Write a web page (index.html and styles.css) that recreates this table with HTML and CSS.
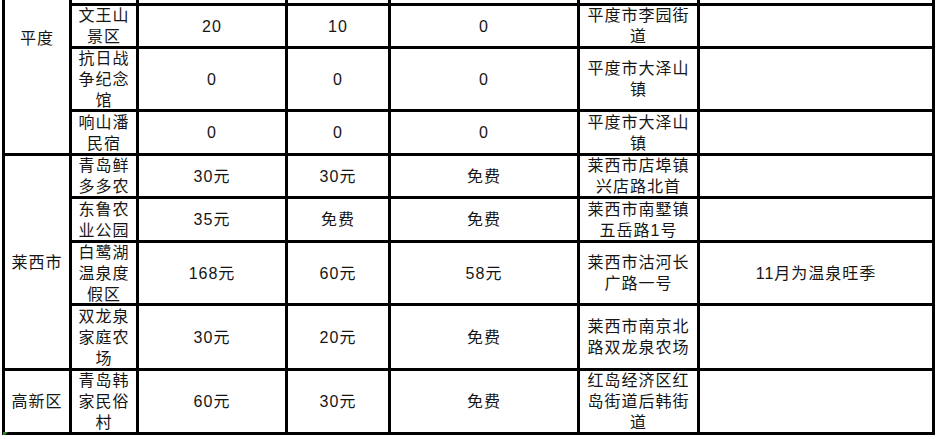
FILE: index.html
```html
<!DOCTYPE html>
<html lang="zh-CN">
<head>
<meta charset="utf-8">
<title>景区票价表</title>
<link rel="stylesheet" href="styles.css">
</head>
<body>
<div class="sheet">
  <!-- row 0 (mostly scrolled out of view) -->
  <div class="cell region span4">平度</div>
  <div class="cell"></div>
  <div class="cell bottom">（元/人次）</div>
  <div class="cell bottom">（元/人次）</div>
  <div class="cell"></div>
  <div class="cell"></div>
  <div class="cell"></div>

  <!-- row 1 -->
  <div class="cell">文王山<br>景区</div>
  <div class="cell">20</div>
  <div class="cell">10</div>
  <div class="cell">0</div>
  <div class="cell">平度市李园街<br>道</div>
  <div class="cell"></div>

  <!-- row 2 -->
  <div class="cell">抗日战<br>争纪念<br>馆</div>
  <div class="cell">0</div>
  <div class="cell">0</div>
  <div class="cell">0</div>
  <div class="cell">平度市大泽山<br>镇</div>
  <div class="cell"></div>

  <!-- row 3 -->
  <div class="cell">响山潘<br>民宿</div>
  <div class="cell">0</div>
  <div class="cell">0</div>
  <div class="cell">0</div>
  <div class="cell">平度市大泽山<br>镇</div>
  <div class="cell"></div>

  <!-- row 4 -->
  <div class="cell region span4">莱西市</div>
  <div class="cell">青岛鲜<br>多多农</div>
  <div class="cell">30元</div>
  <div class="cell">30元</div>
  <div class="cell">免费</div>
  <div class="cell">莱西市店埠镇<br>兴店路北首</div>
  <div class="cell"></div>

  <!-- row 5 -->
  <div class="cell">东鲁农<br>业公园</div>
  <div class="cell">35元</div>
  <div class="cell">免费</div>
  <div class="cell">免费</div>
  <div class="cell">莱西市南墅镇<br>五岳路1号</div>
  <div class="cell"></div>

  <!-- row 6 -->
  <div class="cell">白鹭湖<br>温泉度<br>假区</div>
  <div class="cell">168元</div>
  <div class="cell">60元</div>
  <div class="cell">58元</div>
  <div class="cell">莱西市沽河长<br>广路一号</div>
  <div class="cell">11月为温泉旺季</div>

  <!-- row 7 -->
  <div class="cell">双龙泉<br>家庭农<br>场</div>
  <div class="cell">30元</div>
  <div class="cell">20元</div>
  <div class="cell">免费</div>
  <div class="cell">莱西市南京北<br>路双龙泉农场</div>
  <div class="cell"></div>

  <!-- row 8 -->
  <div class="cell region marker">高新区</div>
  <div class="cell">青岛韩<br>家民俗<br>村</div>
  <div class="cell">60元</div>
  <div class="cell">30元</div>
  <div class="cell">免费</div>
  <div class="cell">红岛经济区红<br>岛街道后韩街<br>道</div>
  <div class="cell"></div>
</div>
</body>
</html>
```

FILE: styles.css
```css
html, body {
  margin: 0;
  padding: 0;
  background: #ffffff;
  overflow: hidden;
}

body {
  font-family: "Liberation Sans", "Noto Sans CJK SC", sans-serif;
  font-size: 16px;
  letter-spacing: 1px;
  color: #161616;
}

.sheet {
  display: grid;
  grid-template-columns: 67px 67px 149px 103px 189px 120px 235px;
  grid-template-rows: 83px 43px 63px 44px 43px 44px 63px 65px 64px;
  width: max-content;
  margin: -80px 0 0 2px;
  border-left: 3px solid #000;
  border-top: 3px solid #000;
}

.cell {
  box-sizing: border-box;
  border-right: 3px solid #000;
  border-bottom: 3px solid #000;
  display: flex;
  align-items: center;
  justify-content: center;
  text-align: center;
  line-height: 21px;
  overflow: visible;
  white-space: nowrap;
}

.bottom {
  align-items: flex-end;
}

.region {
  padding-top: 0;
}

.span4 {
  grid-row: span 4;
}

.marker {
  position: relative;
}

.marker::after {
  content: "";
  position: absolute;
  left: -2px;
  top: 100%;
  width: 0;
  height: 0;
  border-top: 5px solid #2e7d32;
  border-right: 5px solid transparent;
}
```
